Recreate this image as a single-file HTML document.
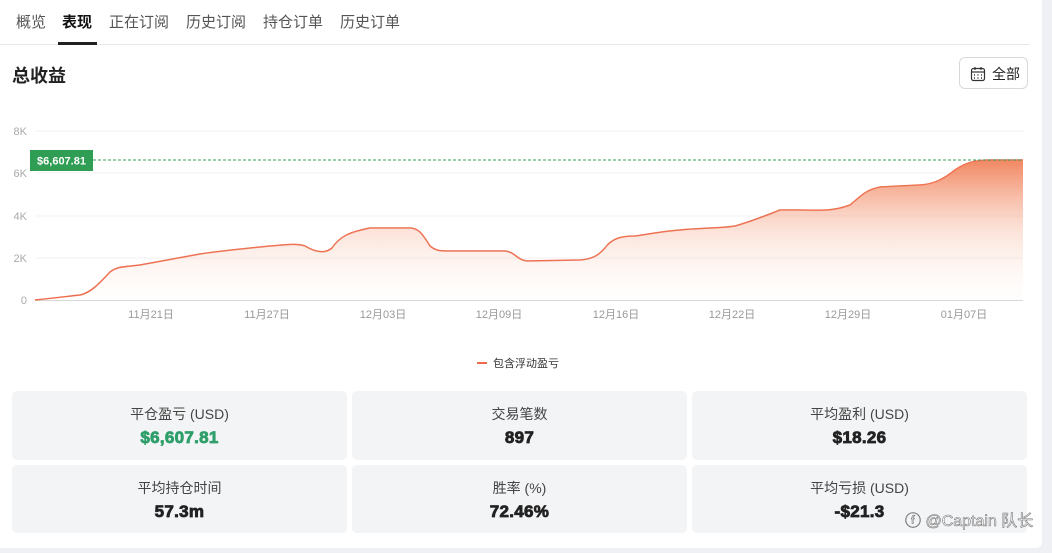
<!DOCTYPE html>
<html><head><meta charset="utf-8"><style>
*{margin:0;padding:0;box-sizing:border-box}
body{width:1052px;height:553px;background:#eef0f3;font-family:"Liberation Sans","Noto Sans CJK SC",sans-serif;position:relative;overflow:hidden}
.card{position:absolute;left:0;top:0;width:1042px;height:548px;background:#fff;border-radius:0 0 6px 0}
.tabs{position:absolute;left:0;top:0;height:45px;width:1030px;border-bottom:1px solid #e5e7eb}
.tab{position:absolute;top:11px;font-size:15px;color:#555}
.tab.act{color:#111;font-weight:bold}
.ul{position:absolute;left:58px;top:42px;width:39px;height:3px;background:#222}
h1{position:absolute;left:12px;top:62px;font-size:18px;font-weight:bold;color:#222}
.btn{position:absolute;left:959px;top:57px;width:69px;height:32px;border:1px solid #d6d8dc;border-radius:6px;font-size:14px;color:#222}
.btn span{position:absolute;left:32px;top:6px}
.stat{position:absolute;width:335px;background:#f3f4f6;border-radius:5px;text-align:center}
.stat .l{font-size:14px;color:#444;margin-top:13px}
.stat .v{font-size:17px;font-weight:900;color:#222;margin-top:4px;letter-spacing:0.3px;-webkit-text-stroke:0.8px currentColor}
.wm{position:absolute;left:905px;top:507px;font-size:16px;color:#fff;-webkit-text-stroke:0.6px #777;}
</style></head><body>
<div class="card">
<div class="tabs">
<div class="tab" style="left:16px">概览</div>
<div class="tab act" style="left:62px">表现</div>
<div class="tab" style="left:109px">正在订阅</div>
<div class="tab" style="left:186px">历史订阅</div>
<div class="tab" style="left:263px">持仓订单</div>
<div class="tab" style="left:340px">历史订单</div>
<div class="ul"></div>
</div>
<h1>总收益</h1>
<div class="btn"><svg style="position:absolute;left:10px;top:8px" width="16" height="16" viewBox="0 0 16 16" fill="none" stroke="#333" stroke-width="1.2"><rect x="1.5" y="2.5" width="13" height="12" rx="2"/><line x1="1.5" y1="6" x2="14.5" y2="6"/><line x1="5" y1="1" x2="5" y2="4"/><line x1="11" y1="1" x2="11" y2="4"/><g stroke-width="1.4"><line x1="4" y1="9" x2="5" y2="9"/><line x1="7.5" y1="9" x2="8.5" y2="9"/><line x1="11" y1="9" x2="12" y2="9"/><line x1="4" y1="12" x2="5" y2="12"/><line x1="7.5" y1="12" x2="8.5" y2="12"/><line x1="11" y1="12" x2="12" y2="12"/></g></svg><span>全部</span></div>

<svg style="position:absolute;left:0;top:110px" width="1042" height="270" viewBox="0 110 1042 270">
<defs><linearGradient id="g" gradientUnits="userSpaceOnUse" x1="0" y1="160" x2="0" y2="300"><stop offset="0" stop-color="#f07a50" stop-opacity="0.9"/><stop offset="0.5" stop-color="#f4a080" stop-opacity="0.3"/><stop offset="1" stop-color="#fde8e0" stop-opacity="0.05"/></linearGradient></defs>
<g stroke="#f0f1f3" stroke-width="1"><line x1="35" y1="131" x2="1023" y2="131"/><line x1="35" y1="173" x2="1023" y2="173"/><line x1="35" y1="216" x2="1023" y2="216"/><line x1="35" y1="258" x2="1023" y2="258"/></g>
<line x1="35" y1="300.5" x2="1023" y2="300.5" stroke="#d8d8d8"/>
<g font-size="11" fill="#aaa" text-anchor="end"><text x="27" y="135">8K</text><text x="27" y="177">6K</text><text x="27" y="220">4K</text><text x="27" y="262">2K</text><text x="27" y="304">0</text></g>
<g font-size="11" fill="#999" text-anchor="middle"><text x="151" y="318">11月21日</text><text x="267" y="318">11月27日</text><text x="383" y="318">12月03日</text><text x="499" y="318">12月09日</text><text x="616" y="318">12月16日</text><text x="732" y="318">12月22日</text><text x="848" y="318">12月29日</text><text x="964" y="318">01月07日</text></g>
<path d="M35,300 C55,298 70,296 80,295 C90,293 98,285 110,272 C118,266 125,267 140,265 L200,254 C220,251 230,250 270,246 C285,245 295,243 305,246 C315,252 325,254 332,248 C340,236 350,232 370,228 L410,228 C418,228 422,233 430,246 C436,251 440,251 450,251 L505,251 C515,252 517,260 527,261 L580,260 C592,259 598,256 605,248 C612,238 622,236 635,236 C650,234 665,231 680,230 C700,228 725,228 735,226 C750,222 765,216 780,210 L800,210 C815,210 832,212 850,205 C860,197 865,190 880,187 L920,185 C935,184 945,178 955,170 C965,163 975,160 990,160 L1023,160"
 fill="none" stroke="#ec6a4a" stroke-width="1.5"/>
<path d="M35,300 C55,298 70,296 80,295 C90,293 98,285 110,272 C118,266 125,267 140,265 L200,254 C220,251 230,250 270,246 C285,245 295,243 305,246 C315,252 325,254 332,248 C340,236 350,232 370,228 L410,228 C418,228 422,233 430,246 C436,251 440,251 450,251 L505,251 C515,252 517,260 527,261 L580,260 C592,259 598,256 605,248 C612,238 622,236 635,236 C650,234 665,231 680,230 C700,228 725,228 735,226 C750,222 765,216 780,210 L800,210 C815,210 832,212 850,205 C860,197 865,190 880,187 L920,185 C935,184 945,178 955,170 C965,163 975,160 990,160 L1023,160 L1023,300 Z" fill="url(#g)"/>
<line x1="93" y1="160" x2="1023" y2="160" stroke="#3a9d5d" stroke-dasharray="3,2" stroke-width="1"/>
<rect x="30" y="150" width="63" height="21" fill="#2f9e54"/>
<text x="61.5" y="164.5" font-size="11" font-weight="bold" fill="#fff" text-anchor="middle">$6,607.81</text>
<line x1="477" y1="363" x2="487" y2="363" stroke="#ec6a4a" stroke-width="2"/>
<text x="493" y="367" font-size="11" fill="#333">包含浮动盈亏</text>
</svg>

<div class="stat" style="left:12px;top:391px;height:69px"><div class="l">平仓盈亏 (USD)</div><div class="v" style="color:#2e9e6a">$6,607.81</div></div>
<div class="stat" style="left:352px;top:391px;height:69px"><div class="l">交易笔数</div><div class="v">897</div></div>
<div class="stat" style="left:692px;top:391px;height:69px"><div class="l">平均盈利 (USD)</div><div class="v">$18.26</div></div>
<div class="stat" style="left:12px;top:465px;height:68px"><div class="l">平均持仓时间</div><div class="v">57.3m</div></div>
<div class="stat" style="left:352px;top:465px;height:68px"><div class="l">胜率 (%)</div><div class="v">72.46%</div></div>
<div class="stat" style="left:692px;top:465px;height:68px"><div class="l">平均亏损 (USD)</div><div class="v">-$21.3</div></div>
</div>
<div class="wm">ⓕ @Captain 队长</div>
</body></html>
